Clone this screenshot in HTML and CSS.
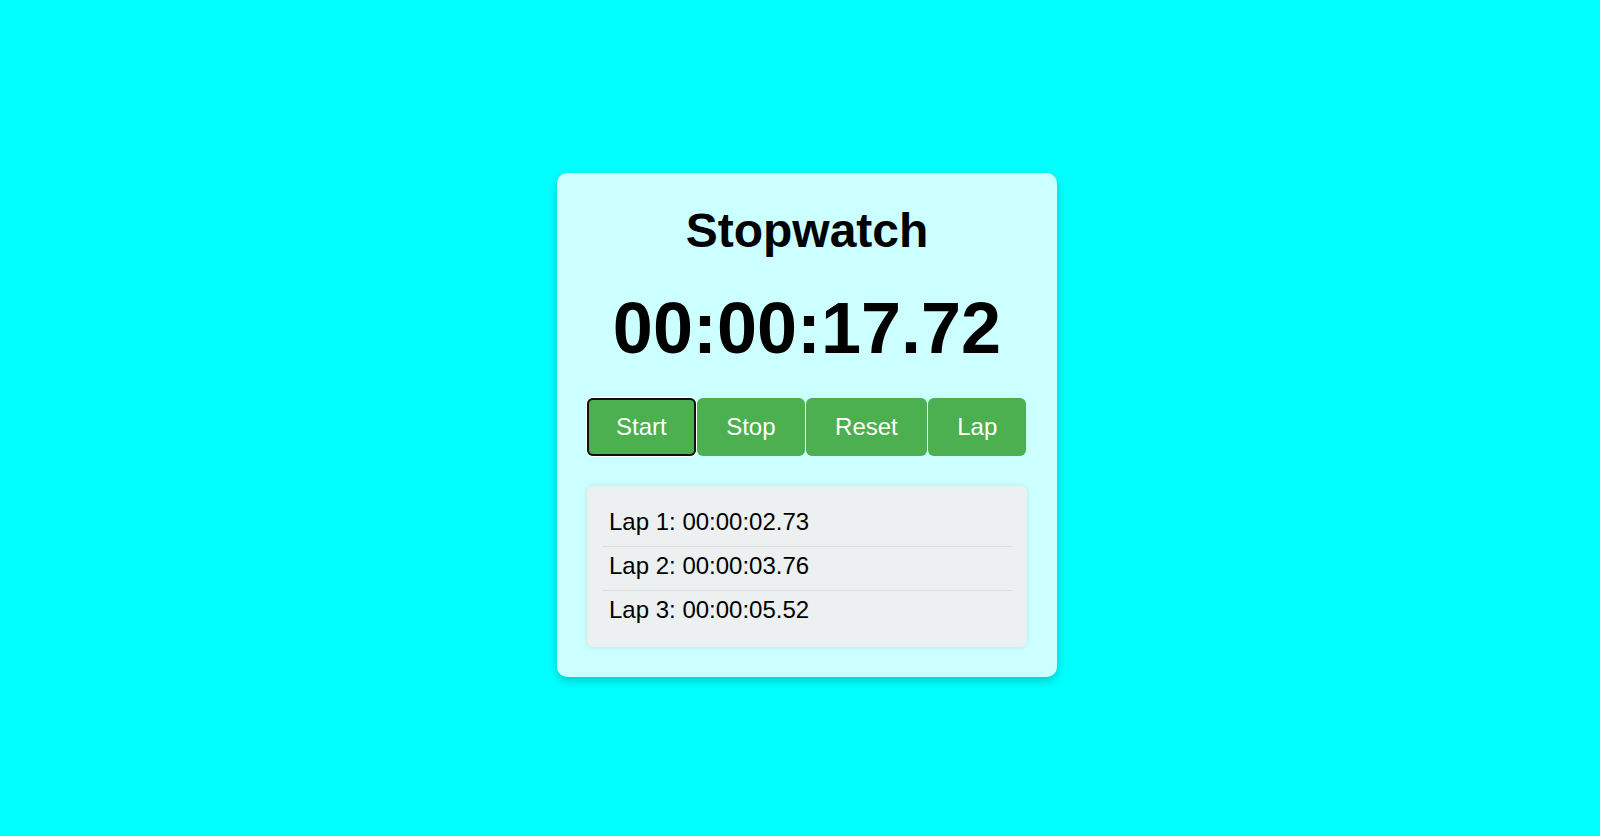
FILE: index.html
```html
<!DOCTYPE html>
<html lang="en">
<head>
<meta charset="utf-8">
<title>Stopwatch</title>
<link rel="stylesheet" href="styles.css">
</head>
<body>
  <div class="card">
    <h1 class="title">Stopwatch</h1>
    <div class="time">00:00:17.72</div>
    <div class="controls">
      <button class="btn is-focused">Start</button>
      <button class="btn">Stop</button>
      <button class="btn">Reset</button>
      <button class="btn">Lap</button>
    </div>
    <div class="laps">
      <ul class="lap-list">
        <li class="lap">Lap 1: 00:00:02.73</li>
        <li class="lap">Lap 2: 00:00:03.76</li>
        <li class="lap">Lap 3: 00:00:05.52</li>
      </ul>
    </div>
  </div>
</body>
</html>
```

FILE: styles.css
```css
* { box-sizing: border-box; }

html, body {
  margin: 0;
  background: #00ffff;
}

body {
  min-height: 836px;
  padding: 14px 0 0 14px;
  display: flex;
  justify-content: center;
  align-items: center;
  font-family: "Liberation Sans", Arial, sans-serif;
  color: #000;
}

.card {
  width: 500px;
  padding: 30px;
  background: #ccffff;
  border-radius: 10px;
  box-shadow: 0 4px 10px rgba(0, 0, 0, 0.2);
  display: flex;
  flex-direction: column;
  align-items: stretch;
}

.title {
  margin: 0 0 29px;
  font-size: 48px;
  font-weight: bold;
  text-align: center;
  line-height: normal;
}

.time {
  margin: 0 0 29px;
  font-size: 72px;
  font-weight: bold;
  text-align: center;
  line-height: normal;
}

.controls {
  display: flex;
  gap: 1.5px;
  margin-bottom: 30px;
}

.btn {
  flex: 0 0 auto;
  padding: 15px 29px;
  border: none;
  border-radius: 6px;
  background: #4caf50;
  color: #fff;
  font-family: "Liberation Sans", Arial, sans-serif;
  font-size: 24px;
  line-height: normal;
  cursor: pointer;
}

.btn.is-focused {
  box-shadow: inset 0 0 0 2px #101010, 0 0 0 1px #ffffff;
}

.laps {
  background: #ecf0f1;
  border-radius: 6px;
  padding: 17px 15px 13px;
  box-shadow: 0 0 5px rgba(0, 0, 0, 0.1);
}

.lap-list {
  list-style: none;
  margin: 0;
  padding: 0;
}

.lap {
  padding: 5px 7px 10px;
  font-size: 24px;
  line-height: normal;
  border-bottom: 1px solid #dcdfe0;
}

.lap:last-child {
  border-bottom: none;
}
```
